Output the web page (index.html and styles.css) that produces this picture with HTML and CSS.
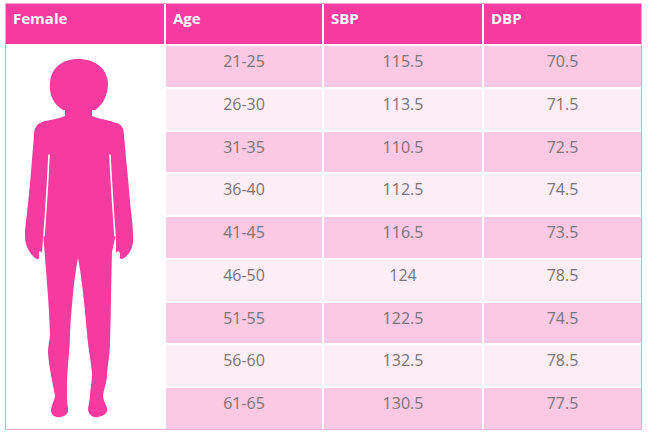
FILE: index.html
```html
<!DOCTYPE html>
<html>
<head>
<meta charset="utf-8">
<link rel="stylesheet" href="styles.css">
</head>
<body>
<div class="table">
  <div class="th">Female</div>
  <div class="th">Age</div>
  <div class="th">SBP</div>
  <div class="th">DBP</div>
  <div class="figure">
    <svg viewBox="6 46 158 383" width="158" height="383" xmlns="http://www.w3.org/2000/svg">
      <path class="sil" d="M63,112 C53,106 49,96 50,85 C51,70 62,61 78,61 C95,61 107,70 108,85 C108,97 103,107 95,112 Z"/>
      <path class="sil" d="M65,110 L65,118 C58,121 48,122 42,124 C36,126 34,131 34,138 C32,160 30,190 27,215 C26,224 25,230 25,238 C25,247 29,255 35,260 C38,262 40,261 39,257 C38,253 40,252 42,255 L43,240 C44,236 43,240 44,246 C46,275 49,305 50,335 C50,342 48,347 48,355 C49,370 53,385 55,398 C54,404 51,408 51,413 C52,418 56,420 61,419 C66,418 69,415 68,410 C67,405 67,402 67,398 C67,385 67,378 68,368 C69,355 70,345 70,335 C72,300 75,275 78,260 C81,275 84,300 87,335 C88,350 91,362 92,375 C92,384 90,392 90,398 C90,403 88,407 88,412 C89,417 93,420 98,419 C104,418 108,415 107,410 C106,406 103,402 103,398 C104,390 107,385 107,375 C108,365 110,355 110,345 C111,320 111,285 112,255 C113,248 115,240 116,238 L116,255 C118,252 120,253 120,257 C119,261 121,262 124,260 C130,256 134,248 133,238 C133,230 132,222 131,214 C129,190 126,160 124,138 C124,131 122,126 116,125 C109,122 99,121 92,118 L92,110 Z"/>
      <path class="gap" d="M49,157 C48,180 46,210 44,238"/>
      <path class="gap" d="M110,157 C111,180 113,210 115,238"/>
    </svg>
  </div>

  <div class="td dark">21-25</div><div class="td dark">115.5</div><div class="td dark">70.5</div>
  <div class="td light">26-30</div><div class="td light">113.5</div><div class="td light">71.5</div>
  <div class="td dark">31-35</div><div class="td dark">110.5</div><div class="td dark">72.5</div>
  <div class="td light">36-40</div><div class="td light">112.5</div><div class="td light">74.5</div>
  <div class="td dark">41-45</div><div class="td dark">116.5</div><div class="td dark">73.5</div>
  <div class="td light">46-50</div><div class="td light">124</div><div class="td light">78.5</div>
  <div class="td dark">51-55</div><div class="td dark">122.5</div><div class="td dark">74.5</div>
  <div class="td light">56-60</div><div class="td light">132.5</div><div class="td light">78.5</div>
  <div class="td dark">61-65</div><div class="td dark">130.5</div><div class="td dark">77.5</div>
</div>
</body>
</html>
```
FILE: styles.css
```css
html, body {
  background: #ffffff;
}
body {
  margin: 3px 0 0 5px;
  font-family: "Open Sans", "Liberation Sans", sans-serif;
}
.table {
  width: 635px;
  height: 425px;
  border: 1px solid #f2a6d0;
  background: #ffffff;
  display: grid;
  grid-template-columns: 158px 156px 158px 157px;
  grid-template-rows: 40px repeat(9, 1fr);
  gap: 2px;
}
.th {
  background: #f73ba0;
  color: #ffffff;
  font-weight: 700;
  font-size: 15px;
  line-height: 20px;
  padding: 4px 0 0 7px;
}
.figure {
  grid-column: 1;
  grid-row: 2 / span 9;
  background: #ffffff;
  display: flex;
  align-items: flex-start;
  justify-content: flex-start;
  margin-top: -2px;
  overflow: hidden;
}
.figure svg {
  display: block;
}
.sil {
  fill: #f53b9f;
}
.gap {
  fill: none;
  stroke: #ffffff;
  stroke-width: 1.6;
  stroke-linecap: round;
}
.td {
  font-size: 16px;
  line-height: 20px;
  color: #7b7378;
  text-align: center;
  padding-top: 5px;
}
.dark {
  background: #fbc9e4;
}
.light {
  background: #fdeef6;
}
```
